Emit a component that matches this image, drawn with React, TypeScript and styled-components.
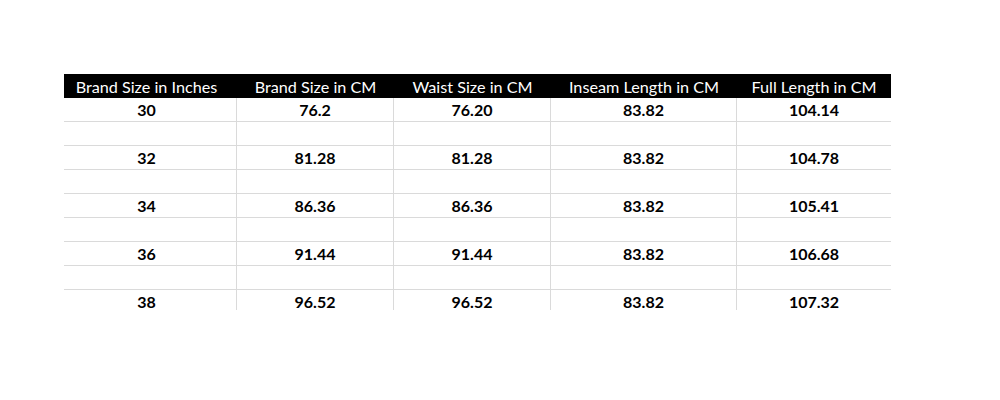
import React from "react";
import styled, { createGlobalStyle } from "styled-components";

const Global = createGlobalStyle`
  html, body { margin: 0; padding: 0; background: #ffffff; }
  body { font-family: Lato, "Liberation Sans", sans-serif; }
`;

const Page = styled.div`
  padding: 74px 0 0 64px;
`;

const Sheet = styled.div`
  width: 827px;
  height: 236px;
  overflow: hidden;
  display: grid;
  grid-template-columns: 173px 157px 157px 186px 154px;
  grid-auto-rows: 24px;
`;

const HeadCell = styled.div<{ $first: boolean }>`
  box-sizing: border-box;
  background: #000000;
  color: #ffffff;
  font-size: 16.2px;
  font-weight: 400;
  display: flex;
  align-items: center;
  justify-content: center;
  padding: 1px ${(p) => (p.$first ? "8px" : "0")} 0 0;
  white-space: nowrap;
`;

const Cell = styled.div<{ $last: boolean; $first: boolean }>`
  box-sizing: border-box;
  border-bottom: 1px solid #dadada;
  border-right: ${(p) => (p.$last ? "none" : "1px solid #dadada")};
  color: #000000;
  font-size: 16px;
  font-weight: 700;
  display: flex;
  align-items: center;
  justify-content: center;
  padding-right: ${(p) => (p.$first ? "7px" : "0")};
  white-space: nowrap;
`;

const headers = [
  "Brand Size in Inches",
  "Brand Size in CM",
  "Waist Size in CM",
  "Inseam Length in CM",
  "Full Length in CM",
];

const data: string[][] = [
  ["30", "76.2", "76.20", "83.82", "104.14"],
  ["32", "81.28", "81.28", "83.82", "104.78"],
  ["34", "86.36", "86.36", "83.82", "105.41"],
  ["36", "91.44", "91.44", "83.82", "106.68"],
  ["38", "96.52", "96.52", "83.82", "107.32"],
];

const rows: string[][] = [];
data.forEach((r, i) => {
  rows.push(r);
  if (i < data.length - 1) rows.push(["", "", "", "", ""]);
});

export default function App() {
  return (
    <>
      <Global />
      <Page>
        <Sheet>
          {headers.map((h, i) => (
            <HeadCell key={h} $first={i === 0}>
              {h}
            </HeadCell>
          ))}
          {rows.map((r, ri) =>
            r.map((v, ci) => (
              <Cell
                key={`${ri}-${ci}`}
                $first={ci === 0}
                $last={ci === r.length - 1}
              >
                {v}
              </Cell>
            ))
          )}
        </Sheet>
      </Page>
    </>
  );
}
